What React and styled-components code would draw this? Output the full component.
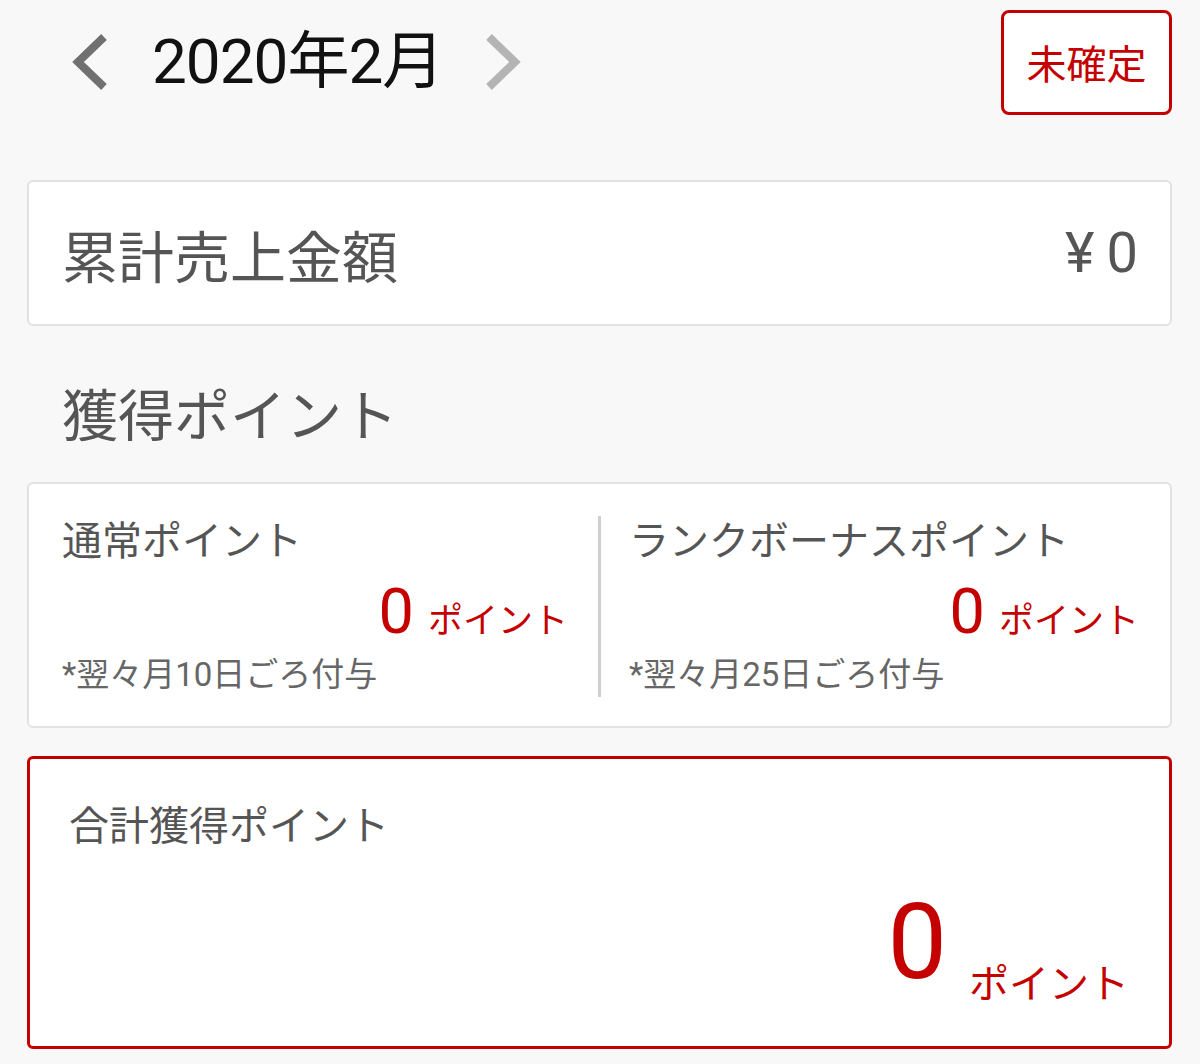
import styled, { createGlobalStyle } from "styled-components"

const GlobalStyle = createGlobalStyle`
  html, body {
    margin: 0;
    padding: 0;
    background: #f8f8f8;
  }
  body {
    font-family: Roboto, "Noto Sans CJK JP", sans-serif;
    color: #555;
  }
`

const RED = "#c40000"

const Page = styled.div`
  width: 1200px;
  height: 1064px;
  box-sizing: border-box;
  padding: 9px 28px 0 27px;
  display: flex;
  flex-direction: column;
`

const TopBar = styled.div`
  display: flex;
  align-items: center;
  justify-content: space-between;
  height: 106px;
`

const MonthNav = styled.div`
  display: flex;
  align-items: center;
  padding-left: 41px;
`

const Arrow = styled.svg`
  width: 44px;
  height: 62px;
  display: block;
`

const MonthTitle = styled.div`
  font-size: 62px;
  color: #111;
  margin: 0 38px 0 40px;
  line-height: 1;
  letter-spacing: -1px;
`

const StatusButton = styled.div`
  width: 171px;
  height: 105px;
  box-sizing: border-box;
  border: 3px solid ${RED};
  border-radius: 8px;
  background: #fff;
  color: ${RED};
  font-size: 40px;
  display: flex;
  align-items: center;
  justify-content: center;
`

const Card = styled.div`
  background: #fff;
  border: ${(p) => (p.$accent ? `3px solid ${RED}` : "2px solid #e2e2e2")};
  border-radius: 6px;
  box-sizing: border-box;
`

const SalesCard = styled(Card)`
  margin-top: 65px;
  height: 146px;
  display: flex;
  align-items: center;
  justify-content: space-between;
  padding: 0 32px 0 33px;
  font-size: 56px;
  color: #555;
`

const Yen = styled.span`
  margin-right: 12px;
`

const SectionTitle = styled.h2`
  margin: 56px 0 30px 35px;
  font-weight: 400;
  font-size: 56px;
  line-height: 70px;
  color: #555;
`

const PointsCard = styled(Card)`
  height: 246px;
  display: grid;
  grid-template-columns: 1fr 3px 1fr;
  align-items: stretch;
  padding: 32px 0;
`

const Divider = styled.div`
  background: #cfcfcf;
  width: 3px;
`

const PointCol = styled.div`
  display: flex;
  flex-direction: column;
  padding: 0 ${(p) => p.$right}px 0 ${(p) => p.$left}px;
`

const ColLabel = styled.div`
  font-size: 40px;
  line-height: 52px;
  color: #555;
`

const Amount = styled.div`
  display: flex;
  justify-content: flex-end;
  align-items: baseline;
  color: ${RED};
  margin-top: 12px;
  line-height: 1;
`

const Number = styled.span`
  font-size: ${(p) => p.$size}px;
  line-height: 1;
`

const Unit = styled.span`
  font-size: ${(p) => p.$size}px;
  margin-left: ${(p) => p.$gap}px;
`

const Note = styled.div`
  font-size: 33px;
  line-height: 44px;
  color: #666;
  margin-top: 10px;
`

const TotalCard = styled(Card)`
  margin-top: 28px;
  height: 293px;
  padding: 42px 40px 0 39px;
  display: flex;
  flex-direction: column;
`

const TotalAmount = styled.div`
  display: flex;
  justify-content: flex-end;
  align-items: flex-end;
  color: ${RED};
  margin-top: 36px;
`

const TotalUnit = styled.span`
  font-size: 40px;
  margin-left: 22px;
  line-height: 1;
  margin-bottom: -10px;
`

const Chevron = ({ dir, color }) => (
  <Arrow viewBox="0 0 44 62">
    <polyline
      points={dir === "left" ? "36,6 10,31 36,56" : "8,6 34,31 8,56"}
      fill="none"
      stroke={color}
      strokeWidth="8"
    />
  </Arrow>
)

const PointBlock = ({ label, note, left, right }) => (
  <PointCol $left={left} $right={right}>
    <ColLabel>{label}</ColLabel>
    <Amount>
      <Number $size={63}>0</Number>
      <Unit $size={35} $gap={14}>ポイント</Unit>
    </Amount>
    <Note>{note}</Note>
  </PointCol>
)

export default function App() {
  return (
    <>
      <GlobalStyle />
      <Page>
        <TopBar>
          <MonthNav>
            <Chevron dir="left" color="#707070" />
            <MonthTitle>2020年2月</MonthTitle>
            <Chevron dir="right" color="#b4b4b4" />
          </MonthNav>
          <StatusButton>未確定</StatusButton>
        </TopBar>

        <SalesCard>
          <span>累計売上金額</span>
          <span>
            <Yen>¥</Yen>0
          </span>
        </SalesCard>

        <SectionTitle>獲得ポイント</SectionTitle>

        <PointsCard>
          <PointBlock label="通常ポイント" note="*翌々月10日ごろ付与" left={33} right={30} />
          <Divider />
          <PointBlock label="ランクボーナスポイント" note="*翌々月25日ごろ付与" left={28} right={31} />
        </PointsCard>

        <TotalCard $accent>
          <ColLabel>合計獲得ポイント</ColLabel>
          <TotalAmount>
            <Number $size={106}>0</Number>
            <TotalUnit>ポイント</TotalUnit>
          </TotalAmount>
        </TotalCard>
      </Page>
    </>
  )
}
